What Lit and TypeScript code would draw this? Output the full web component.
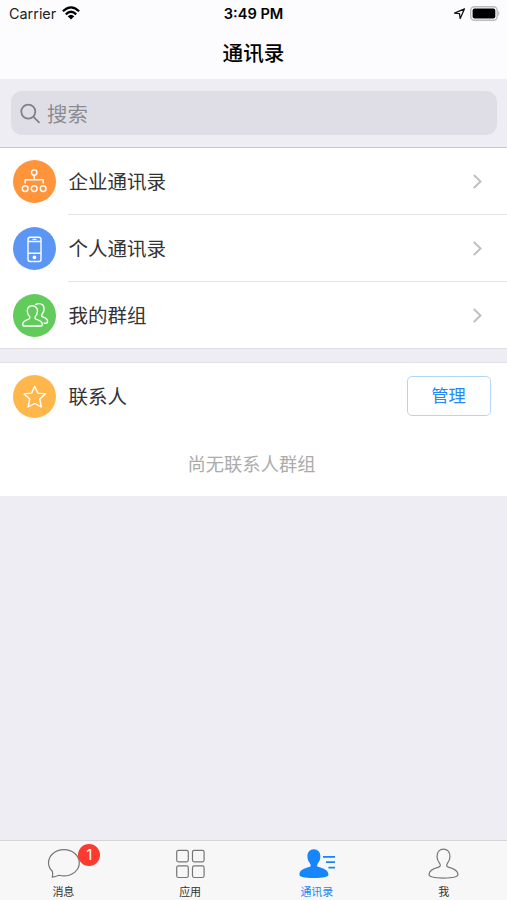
import { LitElement, html, css, svg } from "lit";
import { customElement } from "lit/decorators.js";

const person =
  "M15.500 1C11.500 1 9 4 9 8.200c0 3 1.300 5.200 2.600 7 1.200 1.600.9 3.200-.9 3.700C5.700 20.200 1 22.200 1 26.400c0 2.600 5.500 3.500 14.500 3.500S30 29 30 26.400c0-4.200-4.700-6.200-9.700-7.500-1.800-.5-2.100-2.100-.9-3.700 1.300-1.800 2.600-4 2.600-7C22 4 19.500 1 15.500 1Z";

const orgIcon = svg`<g stroke-width="1.400"><circle cx="21.200" cy="12.600" r="2.700"/><path d="M21.200 15.300V19.800M12.200 23.400V19.800H30.200V23.400"/><circle cx="12.200" cy="28.600" r="2.900"/><circle cx="21.200" cy="28.600" r="2.900"/><circle cx="30.200" cy="28.600" r="2.900"/></g>`;
const phoneIcon = svg`<g stroke-width="1.400"><rect x="15" y="10.300" width="13" height="24.200" rx="2.200"/><path d="M15 14.500H28M15 26.200H28M19.500 12.400H23.500" /><circle cx="21.400" cy="30.300" r="1.200" fill="#fff"/></g>`;
const groupIcon = svg`<g stroke-width="1.400"><path d="M19.300 11.700c-3 0-5 2.200-5 5.300 0 2.500.9 4 2 5.200.9 1.100.6 2.600-.5 3-3.400 1.100-6.100 2.300-6.100 5.200 0 1.300.7 1.600 2 1.600h15.600c1.300 0 2-.3 2-1.600 0-2.900-2.900-4.100-6.300-5.200-1.100-.4-1.400-1.900-.5-3 1.100-1.200 2-2.700 2-5.200 0-3.100-2.200-5.300-5.200-5.300Z"/><path d="M22.300 10.700c1-.7 2.200-1.100 3.700-1.100 3.200 0 5.100 2.300 5.100 5.400 0 2.300-.8 3.800-1.900 5-1 1.200-.7 2.500.5 2.900 3 1 4.900 2.400 4.900 4.900 0 1.100-.6 1.500-1.800 1.500h-2.200"/></g>`;
const starIcon = svg`<path stroke-width="1.400" d="M21.700 11.200l3.100 6.900 7.500.8-5.600 5.100 1.600 8-6.600-3.500-6.600 3.500 1.600-8-5.600-5.100 7.500-.8Z"/>`;

const entries = [
  { label: "企业通讯录", tone: "orange", icon: orgIcon },
  { label: "个人通讯录", tone: "blue", icon: phoneIcon },
  { label: "我的群组", tone: "green", icon: groupIcon },
];

const tabs = [
  {
    label: "消息",
    badge: "1",
    icon: svg`<path d="M6.300 24.300C3.900 22 2.500 19 2.500 15.800 2.500 8.500 9.300 2.700 17.900 2.700S33.300 8.500 33.300 15.800 26.500 28.900 17.900 28.900c-1.700 0-3.400-.2-4.900-.7-2 .9-4.200 1.700-6.700 1.900.5-1.800.6-3.900 0-5.800Z"/>`,
  },
  {
    label: "应用",
    icon: svg`<rect x="3.700" y="3.300" width="11.600" height="11.600" rx="1.800"/><rect x="19.500" y="3.300" width="11.600" height="11.600" rx="1.800"/><rect x="3.700" y="18.900" width="11.600" height="11.600" rx="1.800"/><rect x="19.500" y="18.900" width="11.600" height="11.600" rx="1.800"/>`,
  },
  {
    label: "通讯录",
    active: true,
    icon: svg`<path transform="translate(-1.600 1.200)" fill="#1785fc" stroke="none" d=${person}/><path stroke="#1785fc" stroke-width="1.700" d="M23 9.800H35M26 15.200H35M28.400 20.600H35"/>`,
  },
  { label: "我", icon: svg`<path transform="translate(1 1.200)" d=${person}/>` },
];

@customElement("app-root")
export class AppRoot extends LitElement {
  static styles = css`
    :host {
      display: flex;
      flex-direction: column;
      height: 900px;
      overflow: hidden;
      background: #eeedf3;
      color: #333;
      font-family: "Liberation Sans", "Noto Sans CJK SC", sans-serif;
    }
    * { box-sizing: border-box; }
    svg { display: block; fill: none; overflow: visible; }
    header { height: 79px; background: #fcfcfe; color: #000; }
    .status {
      display: grid;
      grid-template-columns: 1fr auto 1fr;
      align-items: center;
      height: 28px;
      padding: 0 6px;
      font: 500 14.500px/28px Inter, sans-serif;
    }
    .left, .right { display: flex; align-items: center; }
    .left { gap: 6px; padding-left: 3px; font-weight: 400; color: #222; font-size: 14.400px; }
    .right { justify-content: flex-end; gap: 4px; }
    .right svg, .left svg { margin-bottom: 1.500px; }
    .time { font-weight: 600; font-size: 14.600px; }
    h1 {
      margin: 0;
      text-align: center;
      font-size: 20.600px;
      font-weight: 500;
      line-height: 48px;
      font-family: "Noto Sans CJK SC", sans-serif;
    }
    .search { height: 69px; padding: 12px 10px 0 11px; border-bottom: 1px solid #c6c6d0; }
    .field {
      display: flex;
      align-items: center;
      gap: 6px;
      height: 44px;
      padding: 0 9px;
      border-radius: 11px;
      background: #dfdee6;
      color: #8b8b91;
      font-size: 20.400px;
    }
    .card { background: #fff; }
    .entries { height: 201px; border-bottom: 1px solid #dfdfe2; }
    .row { display: flex; height: 67px; padding-left: 13.400px; gap: 12px; align-items: center; }
    .entry:last-child { height: 66.800px; }
    .body {
      flex: 1;
      display: flex;
      align-items: center;
      justify-content: space-between;
      height: 100%;
      padding-right: 24.500px;
      border-bottom: 1px solid #e2e2e4;
      font-size: 19.500px;
    }
    .entry:last-child .body, .plain { border-bottom: 0; }
    .label { position: relative; top: -1px; }
    .disc { width: 43px; height: 43px; border-radius: 50%; }
    .disc svg { stroke: #fff; stroke-linejoin: round; }
    .orange { background: #ff943b; }
    .blue { background: #5b96f5; }
    .green { background: #61cb5b; }
    .amber { background: #ffb74c; }
    .contacts { margin-top: 13px; height: 134px; border-top: 1px solid #e2e2e5; }
    .body.plain { padding-right: 16.500px; }
    button {
      width: 84px;
      height: 40px;
      padding: 0 0 2px;
      border: 1.500px solid #b3d5fb;
      border-radius: 5px;
      background: #fff;
      color: #2587f5;
      font: 17.300px "Noto Sans CJK SC", sans-serif;
      position: relative;
      top: -1px;
    }
    .empty { margin: 0; padding-right: 4px; text-align: center; font-size: 18.300px; line-height: 69px; color: #ababab; }
    nav {
      display: grid;
      grid-template-columns: repeat(4, 1fr);
      height: 60px;
      margin-top: auto;
      border-top: 1px solid #d5d5d9;
      background: #f7f7f8;
    }
    .tab { display: flex; flex-direction: column; align-items: center; padding-top: 6px; font-size: 11px; line-height: 16px; color: #333; }
    .tab svg { stroke: #777; stroke-width: 1.200; }
    .glyph { position: relative; height: 37px; }
    .active { color: #2587f5; }
    .badge {
      position: absolute;
      left: 32px;
      top: -3px;
      width: 22px;
      height: 22px;
      border-radius: 50%;
      background: #fb3a30;
      color: #fff;
      text-align: center;
      font: 15px/22px Inter, sans-serif;
    }
  `;

  private disc(tone: string, icon: unknown) {
    return html`<div class="disc ${tone}"><svg width="43" height="43" viewBox="0 0 43 43">${icon}</svg></div>`;
  }

  render() {
    return html`
      <header>
        <div class="status">
          <div class="left">
            <span>Carrier</span>
            <svg width="18" height="14" viewBox="0 0 18 14" stroke="#000" stroke-width="2.300">
              <path d="M.9 5.300Q9-2.600 17.100 5.300M3.800 8.300Q9 3.300 14.200 8.300" />
              <path fill="#000" stroke="none" d="M5.700 10.300Q9 7.300 12.300 10.300L9 13.600Z" />
            </svg>
          </div>
          <span class="time">3:49 PM</span>
          <div class="right">
            <svg width="13" height="13" viewBox="0 0 13 13" stroke="#111" stroke-width="1.300" stroke-linejoin="round">
              <path d="M1.500 6.100L11.500 1.800 7.200 11.500 6.500 6.700Z" />
            </svg>
            <svg width="31" height="15" viewBox="0 0 31 15">
              <rect x=".7" y=".7" width="26.500" height="13.600" rx="3.800" stroke="#bbb" stroke-width="1.400" />
              <rect x="2.600" y="2.600" width="22.700" height="9.800" rx="2" fill="#000" />
              <path d="M28.200 4.800Q30.600 7.500 28.200 10.200Z" fill="#bbb" />
            </svg>
          </div>
        </div>
        <h1>通讯录</h1>
      </header>
      <div class="search">
        <div class="field">
          <svg width="21" height="21" viewBox="0 0 21 21" stroke="#808086" stroke-width="1.800" stroke-linecap="round">
            <circle cx="8.300" cy="8.600" r="7" /><path d="M13.500 13.900L19 19.300" />
          </svg>
          <span>搜索</span>
        </div>
      </div>
      <section class="card entries">
        ${entries.map(
          (e) => html`<div class="row entry">
            ${this.disc(e.tone, e.icon)}
            <div class="body">
              <span class="label">${e.label}</span>
              <svg width="11" height="15" viewBox="0 0 11 15" stroke="#c0c0c3" stroke-width="2"><path d="M1.800 1L8.500 7.500 1.800 14" /></svg>
            </div>
          </div>`
        )}
      </section>
      <section class="card contacts">
        <div class="row">
          ${this.disc("amber", starIcon)}
          <div class="body plain"><span class="label">联系人</span><button>管理</button></div>
        </div>
        <p class="empty">尚无联系人群组</p>
      </section>
      <nav>
        ${tabs.map(
          (t) => html`<div class="tab ${t.active ? "active" : ""}">
            <div class="glyph">
              <svg width="34" height="34" viewBox="0 0 34 34">${t.icon}</svg>
              ${t.badge ? html`<span class="badge">${t.badge}</span>` : ""}
            </div>
            <span>${t.label}</span>
          </div>`
        )}
      </nav>
    `;
  }
}
